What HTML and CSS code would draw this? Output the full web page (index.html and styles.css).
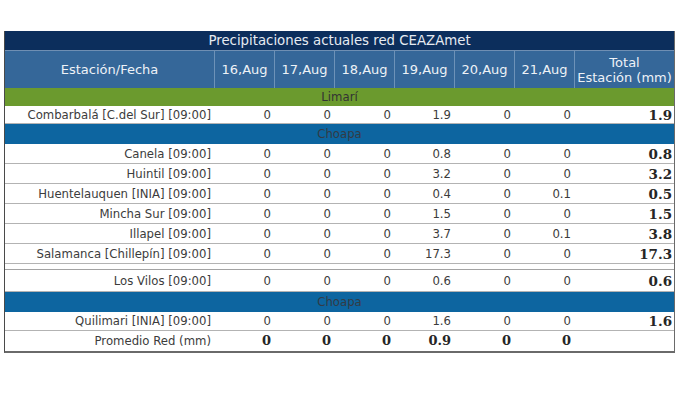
FILE: index.html
```html
<!DOCTYPE html>
<html lang="es">
<head>
<meta charset="utf-8">
<link rel="stylesheet" href="styles.css">
</head>
<body>
<div class="wrap">
<table class="precip">
  <colgroup>
    <col class="c-name"><col class="c-day"><col class="c-day"><col class="c-day"><col class="c-day"><col class="c-day"><col class="c-day"><col class="c-total">
  </colgroup>
  <tr class="title"><td colspan="8">Precipitaciones actuales red CEAZAmet</td></tr>
  <tr class="head">
    <th>Estación/Fecha</th><th>16,Aug</th><th>17,Aug</th><th>18,Aug</th><th>19,Aug</th><th>20,Aug</th><th>21,Aug</th><th>Total<br>Estación (mm)</th>
  </tr>
  <tr class="group green g1"><td colspan="8">Limarí</td></tr>
  <tr class="row r18"><td class="name">Combarbalá [C.del Sur] [09:00]</td><td>0</td><td>0</td><td>0</td><td>1.9</td><td>0</td><td>0</td><td class="tot">1.9</td></tr>
  <tr class="group blue g2"><td colspan="8">Choapa</td></tr>
  <tr class="row"><td class="name">Canela [09:00]</td><td>0</td><td>0</td><td>0</td><td>0.8</td><td>0</td><td>0</td><td class="tot">0.8</td></tr>
  <tr class="row"><td class="name">Huintil [09:00]</td><td>0</td><td>0</td><td>0</td><td>3.2</td><td>0</td><td>0</td><td class="tot">3.2</td></tr>
  <tr class="row"><td class="name">Huentelauquen [INIA] [09:00]</td><td>0</td><td>0</td><td>0</td><td>0.4</td><td>0</td><td>0.1</td><td class="tot">0.5</td></tr>
  <tr class="row"><td class="name">Mincha Sur [09:00]</td><td>0</td><td>0</td><td>0</td><td>1.5</td><td>0</td><td>0</td><td class="tot">1.5</td></tr>
  <tr class="row"><td class="name">Illapel [09:00]</td><td>0</td><td>0</td><td>0</td><td>3.7</td><td>0</td><td>0.1</td><td class="tot">3.8</td></tr>
  <tr class="row"><td class="name">Salamanca [Chillepín] [09:00]</td><td>0</td><td>0</td><td>0</td><td>17.3</td><td>0</td><td>0</td><td class="tot">17.3</td></tr>
  <tr class="spacer"><td colspan="8"></td></tr>
  <tr class="row r22"><td class="name">Los Vilos [09:00]</td><td>0</td><td>0</td><td>0</td><td>0.6</td><td>0</td><td>0</td><td class="tot">0.6</td></tr>
  <tr class="group blue g2"><td colspan="8">Choapa</td></tr>
  <tr class="row r19"><td class="name">Quilimari [INIA] [09:00]</td><td>0</td><td>0</td><td>0</td><td>1.6</td><td>0</td><td>0</td><td class="tot">1.6</td></tr>
  <tr class="row avg"><td class="name">Promedio Red (mm)</td><td class="b">0</td><td class="b">0</td><td class="b">0</td><td class="b">0.9</td><td class="b">0</td><td class="b">0</td><td></td></tr>
</table>
</div>
</body>
</html>
```

FILE: styles.css
```css
html, body {
  margin: 0;
  padding: 0;
  background: #ffffff;
}

.wrap {
  padding: 31px 5px 0 4px;
}

.precip {
  width: 671px;
  table-layout: fixed;
  border-collapse: separate;
  border-spacing: 0;
  font-family: "DejaVu Sans", Verdana, sans-serif;
  font-size: 11.7px;
  color: #3c3c3c;
  border-left: 1px solid #4a4a4a;
  border-right: 1px solid #6a6a6a;
  border-bottom: 2px solid #6a6a6a;
}

.c-name { width: 209px; }
.c-day { width: 60px; }
.c-total { width: 100px; }

.precip td, .precip th {
  padding: 0 3px;
  white-space: nowrap;
  overflow: hidden;
  line-height: 14px;
}

.title { height: 20px; }

.title td {
  background: #0c2e5c;
  color: #e6ebf2;
  text-align: center;
  font-size: 13.3px;
  border-bottom: 1px solid #6f8fb3;
}

.head { height: 37px; }

.head th {
  background: #356799;
  color: #eef2f7;
  font-weight: normal;
  font-size: 13px;
  line-height: 15px;
  text-align: center;
  border-left: 1px solid #6d92b8;
  padding: 0;
}

.head th:first-child {
  border-left: none;
}

.group td {
  text-align: center;
  color: #333333;
  padding: 0;
}

.g1 { height: 18px; }
.g2 { height: 20px; }

.green td { background: #6b9a2e; }
.blue td { background: #0d65a0; color: #333b45; }

.row { height: 20px; }
.row.r18 { height: 18px; }
.row.r22 { height: 22px; }
.row.r19 { height: 19px; }

.row td {
  text-align: right;
  border-bottom: 1px solid #b3b3b3;
}

.row td.name { padding-right: 3px; }

.tot, .b {
  font-family: "DejaVu Serif", Georgia, serif;
  font-weight: bold;
  font-size: 13.5px;
  color: #262626;
  line-height: 12px;
  padding-bottom: 2px;
}

.b { font-size: 13px; }

.precip .tot { padding-right: 2px; }

.spacer { height: 6px; }

.spacer td {
  padding: 0;
  line-height: 0;
  border-bottom: 1px solid #a3a3a3;
}

.avg { height: 20px; }
.avg td { border-bottom: none; }
```
